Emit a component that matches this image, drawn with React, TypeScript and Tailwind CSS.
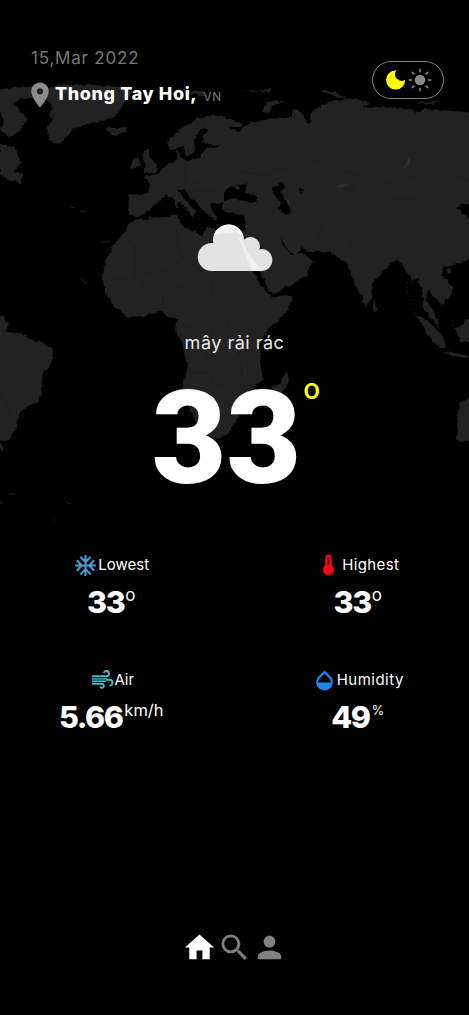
import { MdHome, MdSearch, MdPerson, MdLocationOn, MdAcUnit, MdOpacity } from "react-icons/md";
import type { ReactNode } from "react";

const LAND = [
  "M0 89L12 88 30 86 48 88 40 93 33 98 20 99 13 104 22 112 27 120 21 130 10 137 0 130 5 120 0 112Z",
  "M0 145L13 147 22 163 13 172 23 174 21 183 8 180 0 174Z",
  "M60 85L95 85 120 87 132 92 125 102 115 117 90 123 72 130 59 145 50 140 46 128 53 120 50 113 52 105 43 98 33 92Z",
  "M106 128L115 128 127 127 127 131 117 135 108 133Z",
  "M147 147L150 158 157 165 156 172 143 174 146 167 142 154Z",
  "M133 160L140 158 140 167 130 169Z",
  "M129 195L148 194 150 183 143 178 157 173 167 165 177 160 175 150 179 150 180 157 187 161 200 158 203 150 220 145 202 143 203 135 210 129 200 130 194 140 195 150 188 157 185 154 183 147 170 150 167 142 180 130 197 118 213 115 228 118 242 123 240 127 228 127 238 132 250 123 263 120 280 118 292 118 293 108 302 113 307 124 311 122 310 114 316 108 330 102 353 98 370 103 363 108 385 107 407 108 417 113 425 109 443 110 474 113 474 203 462 205 457 208 463 214 474 222 474 259 457 263 443 267 442 275 452 287 452 295 442 304 433 295 427 290 426 300 433 310 440 328 430 318 423 307 423 290 417 278 413 282 407 272 398 260 390 263 387 268 373 282 372 298 366 306 358 290 350 272 347 263 342 260 330 252 308 252 303 247 295 255 288 250 280 237 283 245 292 255 298 253 303 252 313 262 307 275 293 283 273 294 269 291 263 277 253 265 240 243 245 230 245 216 236 214 222 210 222 202 210 204 217 220 210 217 200 207 191 197 183 188 178 190 187 203 197 211 192 217 186 207 172 198 167 195 160 200 150 210 138 217 128 214Z",
  "M137 220L157 217 177 215 180 223 190 230 202 235 207 228 215 230 233 234 238 240 247 253 255 275 263 288 272 298 293 295 288 310 270 328 260 340 260 363 263 380 250 390 248 403 238 417 230 430 220 439 208 438 200 430 192 413 183 397 183 383 188 367 182 343 175 330 177 318 167 317 162 311 143 316 128 317 115 307 105 293 103 280 105 262 115 243 125 233 128 225Z",
  "M-4 313L4 316 9 325 5 332 20 333 30 339 42 342 53 350 52 362 43 373 42 390 38 402 30 405 20 412 17 425 9 440-4 441Z",
  "M0 443L4 448 0 453Z",
  "M287 371L289 380 282 395 275 397 272 387 280 383Z",
  "M373 300L378 310 374 313 372 309Z",
  "M415 314L427 320 443 337 445 348 440 348 430 337Z",
  "M443 352L455 353 472 357 472 359 452 356Z",
  "M455 327L462 325 472 316 472 342 460 342Z",
  "M446 269L450 268 452 272 448 274Z",
  "M472 396L460 403 458 423 456 438 460 442 472 439Z",
  "M262 112L266 103 275 100 285 100 272 106 268 113Z",
  "M175 198L178 198 178 207 175 207Z",
  "M319 90L334 92 346 97 333 96Z M414 102L440 102 430 104Z M241 91L272 89 271 91Z M188 91L201 90 208 96 199 96Z",
];

const SEAS = [
  "M224 193L230 186 240 190 239 185 247 183 245 192 257 197 257 201 247 202 234 198 224 201Z",
  "M272 188L283 183 285 188 280 193 287 202 292 213 285 215 279 210 280 202 273 193Z",
  "M299 188L304 189 303 193 299 192Z",
];

const BORDERS =
  "M230 164l12 8 26 3 6-6 22-1 8-9 24 4 18 9 20 7 22 4 20-7 22 7 18-11 27 12M360 176l12 12 22 10 25 0 30-15M274 182l-5-10M331 171l28 2-6 18-20 9-8 13-14 1-20-14-10 3M325 213l18 7 17 16 30 18 13-4 14 8 10 12M307 225l-12-12M315 250l8-26M354 236l-6 18M128 241l36 30 24-17M176 228l4 28 24 16M215 232l0 40 30 0M135 247v31h-28M141 296l3-22 20-4M163 308l0-12 13-10 16 3M214 273l-2 20 14 16 25-1M175 330l20-4 8-20 8-5M190 345l22-2 0-12 16-2M226 309l2 18 12 13 18 0M205 343l4 27 20 3 12-14M190 373l22 0 0 14-6 10M212 387l15-2 12-12M206 397l0 20-10 3M0 391l8 16 2 10M152 180l25 13M166 166l-3 12 14 11M184 162l2 22M200 160l12 22M206 120l-5 15M214 117l6 22M218 145l16 30M181 180l20 3 20-6M190 190l30 0";

function WorldMap() {
  return (
    <svg className="absolute inset-0 h-full w-full" viewBox="0 0 469 1015" aria-hidden="true">
      <defs>
        <filter id="coast" x="-5%" y="-5%" width="110%" height="110%" colorInterpolationFilters="sRGB">
          <feTurbulence type="fractalNoise" baseFrequency="0.16" numOctaves="3" seed="4" result="n" />
          <feDisplacementMap in="SourceGraphic" in2="n" scale="4.5" xChannelSelector="R" yChannelSelector="G" />
        </filter>
      </defs>
      <g filter="url(#coast)">
        {LAND.map((d) => <path key={d} d={d} fill="#222222" />)}
        {SEAS.map((d) => <path key={d} d={d} fill="#000" />)}
      </g>
      <path d={BORDERS} fill="none" stroke="#1c1c1c" strokeWidth=".6" />
      <path d="M409 157q4 6-6 12q5-5 6-12M337 188q1-5 12-3M286 198l4 4-2 2M231 350l4 8M244 362l2 14" fill="#303030" stroke="#303030" strokeWidth=".8" />
      <path d="M0 503h3M9 494h6M66 502l5 2M54 520h2M102 242h8M71 207l4 1M80 211l6 1M81 279l6 5" stroke="#202020" strokeWidth="1" />
      <path d="M407 273v18l4 12 5 12 6 9 8 12 8 10M452 320l4 14" fill="none" stroke="#1c1c1c" strokeWidth="1" strokeDasharray="1.5 3" />
    </svg>
  );
}

function Cloud() {
  return (
    <svg className="h-[47px] w-[76px]" viewBox="197 224 76 47">
      <g fill="#e3e3e3">
        <circle cx="228.500" cy="240" r="15.500" />
        <circle cx="211.800" cy="257" r="14" />
        <circle cx="250.500" cy="246.500" r="9.500" />
        <circle cx="261.400" cy="260" r="11" />
        <path d="M211.800 245h39l10.600 10v16h-49.600Z" />
      </g>
      <path d="M213.800 235a15.500 15.500 0 0 1 29.800 1.500l-3-1-5-4-5 2-5-1-6 2Z" fill="#f1f1f1" />
      <path d="m238 237 4 3 6 13 5 6 9 11.900h-10l-5-13Z" fill="#f1f1f1" />
      <path d="M218.500 240v22h27M201 262l14 7" fill="none" stroke="#e9e9e9" strokeWidth=".8" />
    </svg>
  );
}

function Moon() {
  return (
    <svg className="size-5" viewBox="0 0 20 20">
      <path d="M10.200.6a6.500 6.500 0 0 0 8.900 9.100A9.500 9.500 0 1 1 10.200.6Z" fill="#ff0" />
    </svg>
  );
}

function Sun() {
  return (
    <svg className="size-6" viewBox="0 0 24 24" fill="#888" stroke="#888" strokeWidth="1.600">
      <circle cx="12" cy="12" r="5.300" stroke="none" />
      <path d="M12 .7v3.500M12 19.800v3.500M.7 12h3.500M19.800 12h3.500M4 4l2.400 2.400M17.600 17.600 20 20M4 20l2.400-2.400M17.600 6.400 20 4" />
    </svg>
  );
}

function Thermometer() {
  return (
    <svg className="h-[22px] w-[25px]" viewBox="0 0 25 22">
      <path d="M12.500.5a3.200 3.200 0 0 0-3.200 3.200v7.600a5.500 5.500 0 1 0 6.400 0V3.700A3.200 3.200 0 0 0 12.500.5Z" fill="#ff0019" />
      <path d="M12.500 3v7.500" stroke="#300006" strokeWidth="1.800" />
      <path d="M12.500 5h1M12.500 7.500h1" stroke="#ff0019" strokeWidth=".8" />
    </svg>
  );
}

function Wind() {
  return (
    <svg className="ml-1 h-[20px] w-[22px]" viewBox="0 0 22 20" fill="none" stroke="#4db6c6">
      <path d="M0 6.200h14.500a2.600 2.600 0 1 0-2.700-3.200M0 13.800h10a2 2 0 1 1-2 2.800" strokeWidth="1.900" />
      <path d="M0 8.800h15M0 11.400h14" strokeWidth="1.300" />
      <path d="M14 9.700h3.500a3 3 0 0 1 0 6" strokeWidth="1.900" />
      <path d="M0 10.100h15" stroke="#2d8794" strokeWidth="1.300" />
    </svg>
  );
}

type StatProps = { icon: ReactNode; label: ReactNode; value: string; unit: ReactNode };

function Stat({ icon, label, value, unit }: StatProps) {
  return (
    <div className="flex h-[115px] flex-col items-center">
      <div className="flex h-6 items-center text-[15px] leading-6">{icon}{label}</div>
      <div className="mt-1.5 flex h-10 items-start leading-[37px]">
        <b className="text-[30.500px] font-extrabold tracking-[-1.500px]">{value}</b>
        {unit}
      </div>
    </div>
  );
}

export default function App() {
  return (
    <main className="relative h-[1015px] w-[469px] overflow-hidden bg-black text-white" style={{ fontFamily: 'Inter, "Noto Sans", sans-serif' }}>
      <WorldMap />
      <div className="relative flex h-full flex-col">
        <header className="flex h-[110px] justify-between pr-[25px] pl-[25px]">
          <div className="pt-[46px]">
            <p className="pl-1.5 text-[17px] leading-6 tracking-[0.8px] text-[#777]">15,Mar 2022</p>
            <div className="mt-[10px] flex h-[30px] items-center">
              <MdLocationOn className="size-[30px] text-[#8c8c8c]" />
              <span className="pb-0.5 text-[18px] leading-[26px] font-extrabold tracking-[0.6px]">Thong Tay Hoi,</span>
              <span className="ml-[6px] pt-1 text-[12px] tracking-[0.6px] text-[#777]">VN</span>
            </div>
          </div>
          <div className="mt-[61px] flex h-[38px] w-[72px] items-center justify-center gap-[2px] rounded-full border border-[#808080] pl-0.5">
            <Moon />
            <Sun />
          </div>
        </header>
        <section className="flex h-[440px] flex-col items-center">
          <div className="mt-[114px] h-[47px]"><Cloud /></div>
          <p className="mt-[58px] text-[18px] leading-7 tracking-[0.5px] text-[#e8e8e8]">mây rải rác</p>
          <div className="mt-[14px] flex items-start pl-[3px]">
            <span className="font-[Roboto] text-[129px] leading-[135px] font-black">33</span>
            <span className="ml-0.5 pt-[4px] text-[28px] leading-[28px] font-medium text-[#ffff19]">o</span>
          </div>
        </section>
        <section className="-mx-3 grid grid-cols-2 pt-[3px]">
          <Stat icon={<MdAcUnit className="size-[25px] text-[#4a99cf]" />} label="Lowest" value="33" unit={<span className="ml-px text-[17px] leading-[24px]">o</span>} />
          <Stat icon={<Thermometer />} label={<span className="ml-px tracking-[0.35px]">Highest</span>} value="33" unit={<span className="ml-px text-[17px] leading-[24px]">o</span>} />
          <Stat icon={<Wind />} label="Air" value="5.66" unit={<span className="ml-0.5 text-[16.500px] leading-[24px]">km/h</span>} />
          <Stat icon={<MdOpacity className="size-[25px] text-[#1e88e5]" />} label={<span className="tracking-[0.5px]">Humidity</span>} value="49" unit={<span className="ml-0.5 text-[13px] leading-[24px]">%</span>} />
        </section>
        <nav className="mt-auto mb-[50px] flex justify-center text-[#808080]">
          <MdHome className="size-[35px] text-white" />
          <MdSearch className="size-[35px]" />
          <MdPerson className="size-[35px]" />
        </nav>
      </div>
    </main>
  );
}
